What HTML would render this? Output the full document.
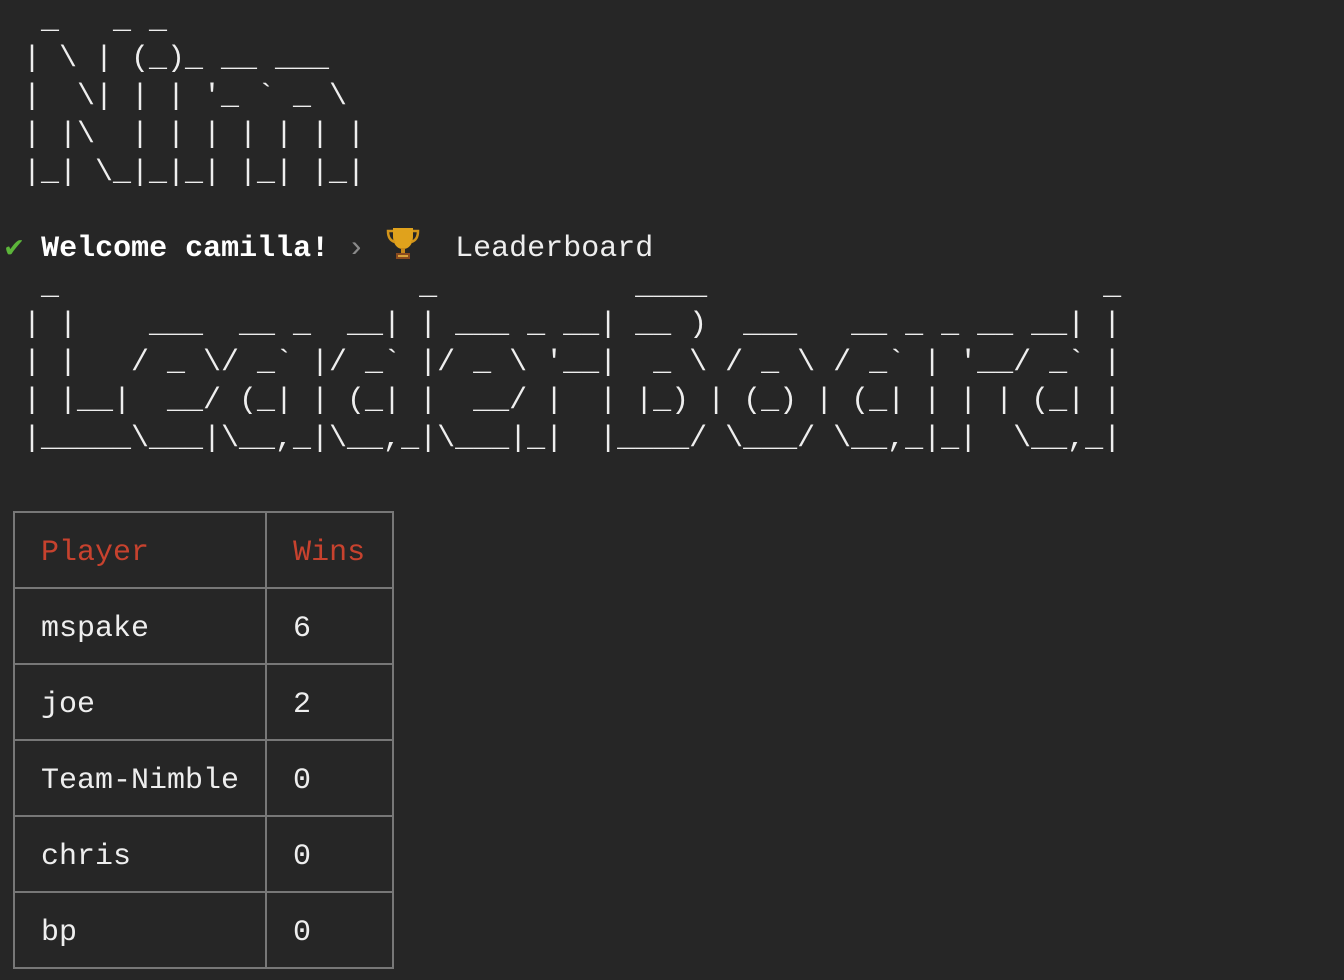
<!DOCTYPE html>
<html><head><meta charset="utf-8"><style>
html,body{margin:0;padding:0;background:#262626;width:1344px;height:980px;overflow:hidden}
pre{position:absolute;left:5px;top:2px;margin:0;font-family:"Liberation Mono","DejaVu Sans Mono",monospace;font-size:30px;line-height:38px;color:#eeeeee;white-space:pre}
.r{color:#c7422e}
.b{font-weight:bold;color:#fff}
.g{color:#5cb53a}
.m{color:#8a8a8a}
.h{position:absolute;height:2px;background:#777}
.v{position:absolute;width:2px;background:#777}
</style></head><body>
<pre>  _   _ _
 | \ | (_)_ __ ___
 |  \| | | '_ ` _ \
 | |\  | | | | | | |
 |_| \_|_|_| |_| |_|

<span class="g">✔</span> <span class="b">Welcome camilla!</span> <span class="m">›</span>     Leaderboard
  _                    _           ____                      _
 | |    ___  __ _  __| | ___ _ __| __ )  ___   __ _ _ __ __| |
 | |   / _ \/ _` |/ _` |/ _ \ '__|  _ \ / _ \ / _` | '__/ _` |
 | |__|  __/ (_| | (_| |  __/ |  | |_) | (_) | (_| | | | (_| |
 |_____\___|\__,_|\__,_|\___|_|  |____/ \___/ \__,_|_|  \__,_|


  <span class="r">Player</span>        <span class="r">Wins</span>

  mspake        6

  joe           2

  Team-Nimble   0

  chris         0

  bp            0
</pre>
<svg style="position:absolute;left:386px;top:226px" width="34" height="36" viewBox="0 0 34 36">
<path d="M7 2h20v8c0 8-4 13-10 13S7 18 7 10z" fill="#e0a21c"/>
<path d="M7 5H2c0 7 3 10 7 11M27 5h5c0 7-3 10-7 11" fill="none" stroke="#d3951a" stroke-width="2.5"/>
<rect x="15" y="22" width="4" height="5" fill="#c8881a"/>
<rect x="10" y="27" width="14" height="6" fill="#8a4a1e"/>
<rect x="12" y="29" width="10" height="2" fill="#d8a23a"/>
</svg>
<div class="h" style="left:13px;width:381px;top:511px"></div>
<div class="h" style="left:13px;width:381px;top:587px"></div>
<div class="h" style="left:13px;width:381px;top:663px"></div>
<div class="h" style="left:13px;width:381px;top:739px"></div>
<div class="h" style="left:13px;width:381px;top:815px"></div>
<div class="h" style="left:13px;width:381px;top:891px"></div>
<div class="h" style="left:13px;width:381px;top:967px"></div>
<div class="v" style="left:13px;top:511px;height:458px"></div>
<div class="v" style="left:265px;top:511px;height:458px"></div>
<div class="v" style="left:392px;top:511px;height:458px"></div>
</body></html>
